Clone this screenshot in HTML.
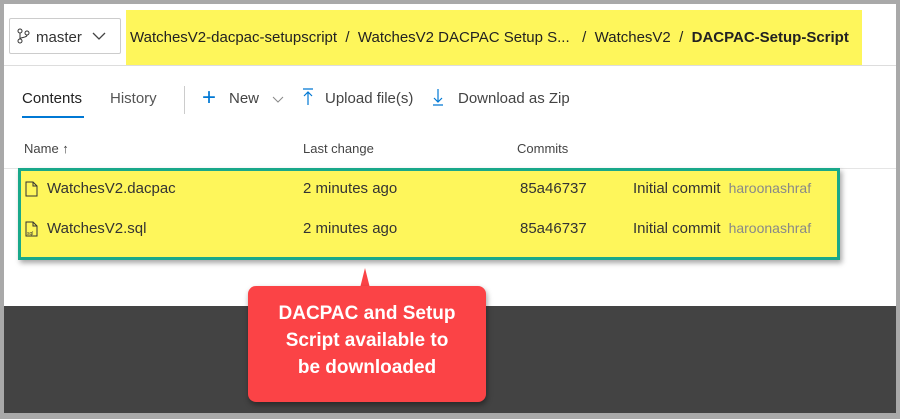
<!DOCTYPE html><html><head><style>
body{margin:0;width:900px;height:419px;overflow:hidden;background:#a9a9a9;font-family:"Liberation Sans",sans-serif;}
.frame{position:absolute;left:4px;top:4px;width:892px;height:409px;background:#fff;overflow:hidden}
.t{position:absolute;white-space:nowrap;color:#333;}
</style></head><body>
<div class="frame">
<div style="position:absolute;left:122px;top:6px;width:736px;height:55px;background:#fef65b"></div>
<div style="position:absolute;left:0;top:61px;width:892px;height:1px;background:#ddd"></div>
<div style="position:absolute;left:5px;top:14px;width:110px;height:34px;border:1px solid #ccc;border-radius:2px;background:#fff"></div>
<svg style="position:absolute;left:13px;top:24px" width="14" height="16" viewBox="0 0 14 16"><circle cx="3" cy="3" r="2" fill="none" stroke="#333"/><circle cx="3" cy="13" r="2" fill="none" stroke="#333"/><circle cx="10" cy="5" r="2" fill="none" stroke="#333"/><path d="M3 5v6M10 7c0 3-7 2-7 4" fill="none" stroke="#333"/></svg>
<div class="t" style="left:32px;top:25px;font-size:15px">master</div>
<svg style="position:absolute;left:88px;top:28px" width="14" height="9"><path d="M1 1l6 6 6-6" fill="none" stroke="#444" stroke-width="1.3"/></svg>
<div class="t" style="left:126px;top:25px;font-size:15px;color:#222">WatchesV2-dacpac-setupscript &nbsp;/ &nbsp;WatchesV2 DACPAC Setup S... &nbsp;&nbsp;/ &nbsp;WatchesV2 &nbsp;/ &nbsp;<b>DACPAC-Setup-Script</b></div>
<div class="t" style="left:18px;top:86px;font-size:15px;color:#222">Contents</div>
<div style="position:absolute;left:18px;top:112px;width:62px;height:2px;background:#0078d4"></div>
<div class="t" style="left:106px;top:86px;font-size:15px;color:#555">History</div>
<div style="position:absolute;left:180px;top:82px;width:1px;height:28px;background:#ccc"></div>
<div class="t" style="left:198px;top:80px;font-size:24px;color:#0078d4;font-weight:300">+</div>
<div class="t" style="left:225px;top:86px;font-size:15px;color:#444">New</div>
<svg style="position:absolute;left:268px;top:92px" width="12" height="8"><path d="M1 1l5 5 5-5" fill="none" stroke="#888"/></svg>
<svg style="position:absolute;left:298px;top:84px" width="12" height="18"><path d="M1 1h10M6 4v13M2 8l4-4 4 4" fill="none" stroke="#0078d4" stroke-width="1.2"/></svg>
<div class="t" style="left:321px;top:86px;font-size:15px;color:#444">Upload file(s)</div>
<svg style="position:absolute;left:428px;top:84px" width="12" height="18"><path d="M1 17h10M6 1v13M2 10l4 4 4-4" fill="none" stroke="#0078d4" stroke-width="1.2"/></svg>
<div class="t" style="left:454px;top:86px;font-size:15px;color:#444">Download as Zip</div>
<div class="t" style="left:20px;top:137px;font-size:13px;color:#444">Name ↑</div>
<div class="t" style="left:299px;top:137px;font-size:13px;color:#444">Last change</div>
<div class="t" style="left:513px;top:137px;font-size:13px;color:#444">Commits</div>
<div style="position:absolute;left:0;top:164px;width:892px;height:1px;background:#e5e5e5"></div>
<div style="position:absolute;left:14px;top:164px;width:816px;height:86px;background:#fef65b;border:3px solid #19a88a;box-shadow:2px 3px 5px rgba(0,0,0,.35)"></div>
<svg style="position:absolute;left:21px;top:177px" width="13" height="16"><path d="M1 1h7l4 4v10H1z M8 1v4h4" fill="none" stroke="#333"/></svg>
<div class="t" style="left:43px;top:176px;font-size:15px">WatchesV2.dacpac</div>
<div class="t" style="left:299px;top:176px;font-size:15px">2 minutes ago</div>
<div class="t" style="left:516px;top:176px;font-size:15px">85a46737</div>
<div class="t" style="left:629px;top:176px;font-size:15px">Initial commit <span style="color:#888;font-size:14px">&nbsp;haroonashraf</span></div>
<svg style="position:absolute;left:21px;top:217px" width="13" height="16"><path d="M1 1h7l4 4v10H1z M8 1v4h4" fill="none" stroke="#333"/><text x="2" y="14" font-size="5" fill="#333">sql</text></svg>
<div class="t" style="left:43px;top:216px;font-size:15px">WatchesV2.sql</div>
<div class="t" style="left:299px;top:216px;font-size:15px">2 minutes ago</div>
<div class="t" style="left:516px;top:216px;font-size:15px">85a46737</div>
<div class="t" style="left:629px;top:216px;font-size:15px">Initial commit <span style="color:#888;font-size:14px">&nbsp;haroonashraf</span></div>
<div style="position:absolute;left:0;top:302px;width:892px;height:107px;background:#434343"></div>
<svg style="position:absolute;left:344px;top:262px" width="30" height="30"><path d="M10 30L17 2 24 30z" fill="#fb4346"/></svg>
<div style="position:absolute;left:244px;top:282px;width:238px;height:116px;background:#fb4346;border-radius:8px;box-shadow:1px 3px 6px rgba(0,0,0,.4)"></div>
<div class="t" style="left:244px;top:296px;width:238px;text-align:center;color:#fff;font-size:19px;font-weight:bold;line-height:27px;white-space:normal">DACPAC and Setup<br>Script available to<br>be downloaded</div>
</div>
</body></html>
